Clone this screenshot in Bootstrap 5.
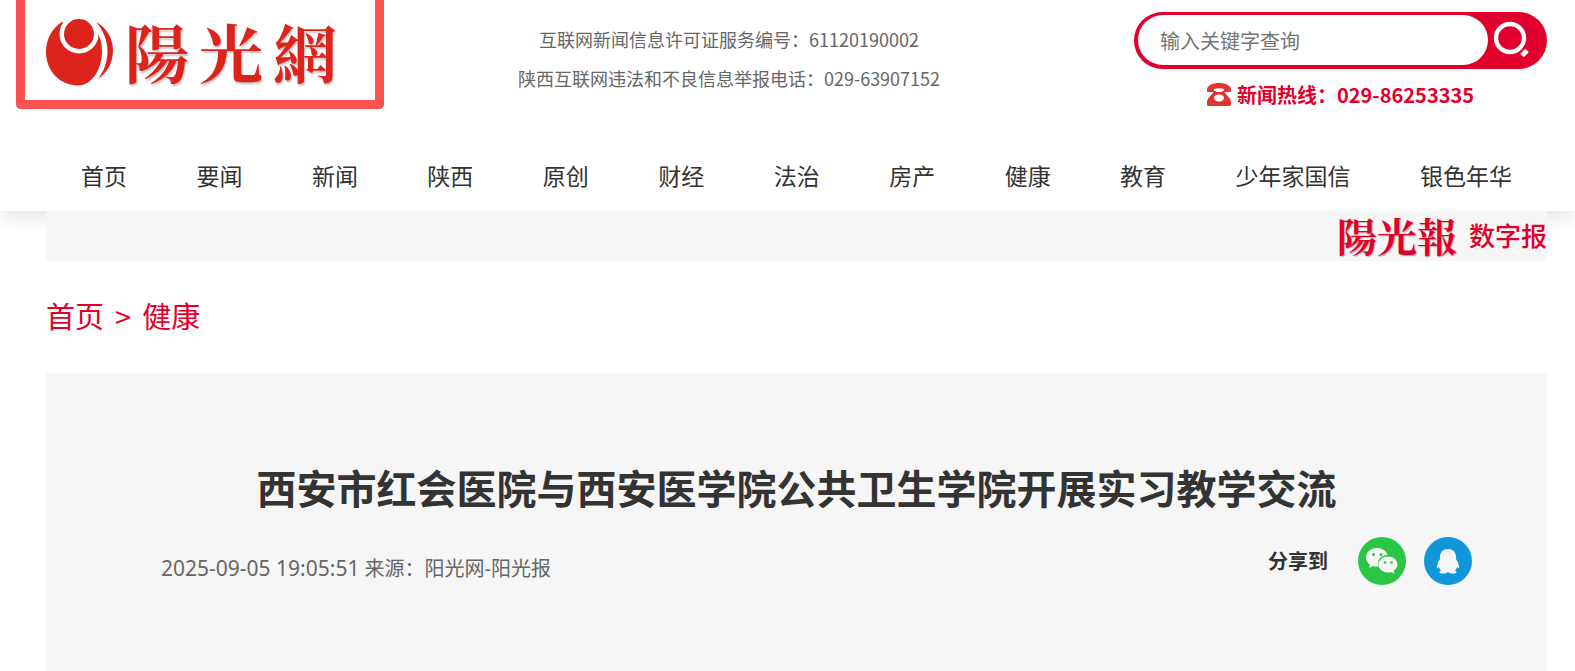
<!DOCTYPE html>
<html lang="zh-CN">
<head>
<meta charset="utf-8">
<meta name="viewport" content="width=device-width, initial-scale=1">
<title>西安市红会医院与西安医学院公共卫生学院开展实习教学交流</title>
<link rel="stylesheet" href="https://cdn.jsdelivr.net/npm/bootstrap@5.3.0/dist/css/bootstrap.min.css">
<style>
  :root { --brand: #e1002c; --panel: #f6f6f6; }
  body { font-family: "Noto Sans CJK SC", sans-serif; color: #333; background: #fff; }
  a { text-decoration: none; }
  .site-header { box-shadow: 0 4px 20px rgba(0, 0, 0, .12); }
  .masthead { padding: 0 28px 0 16px; }
  .brand-frame { width: 368px; height: 109px; padding: 0 0 0 20px; border: 9px solid #fc5250; border-top: 0; border-radius: 0 0 5px 5px; color: #dc241c; }
  .brand-name { font: 700 64px/84px "Noto Serif CJK TC", "Noto Sans CJK TC", serif; gap: 10px; margin-left: 10px; text-shadow: 1px 2px 2px rgba(0, 0, 0, .25); }
  .licence { font-size: 18px; line-height: 39px; color: #666; padding: 20px 60px 0 0; }
  .search-side { width: 413px; padding-top: 12px; }
  .search-pill { height: 57px; background: var(--brand); border-radius: 29px; padding: 3px 14px 4px 4px; }
  .search-pill .form-control { font-size: 20px; height: 50px; border: 0; border-radius: 25px; padding: 0 22px; box-shadow: none; }
  .search-pill .form-control::placeholder { color: #757575; }
  .search-pill button { width: 45px; }
  .hotline { font-size: 20px; line-height: 30px; color: var(--brand); margin-top: 11px; gap: 6px; }
  .main-nav { padding: 15px 63px 18px 81px; margin-top: 32px; }
  .main-nav a { font-size: 23px; line-height: 36px; color: #333; }
  .content { padding: 0 28px 0 46px; }
  .paper-bar { background: var(--panel); height: 50px; }
  .paper-bar a { color: var(--brand); gap: 12px; }
  .paper-name { font: 700 40px/48px "Noto Serif CJK TC", "Noto Sans CJK TC", serif; text-shadow: 1px 1px 1px rgba(0, 0, 0, .25); }
  .paper-label { font-size: 26px; font-weight: 500; line-height: 48px; }
  .crumbs { font-size: 29px; line-height: 40px; padding: 34px 0 38px; gap: 11px; color: var(--brand); }
  .crumbs a { color: var(--brand); }
  .article { background: var(--panel); padding: 84px 75px 84px 115px; min-height: 299px; }
  .article h1 { font-size: 40px; line-height: 60px; margin: 0 0 4px -40px; }
  .meta { font-family: "Noto Sans", "Noto Sans CJK SC", sans-serif; font-size: 20px; line-height: 30px; color: #666; padding-top: 16px; }
  .meta time { font-size: 21px; }
  .share { gap: 18px; }
  .share span { font-size: 20px; margin-right: 12px; }
</style>
</head>
<body>
<header class="site-header">
  <div class="masthead d-flex align-items-start">
    <a href="#" class="brand-frame d-flex align-items-center flex-shrink-0" aria-label="陽光網">
      <svg width="70" height="72" viewBox="0 -3 70 72" fill="#dc241c" aria-hidden="true">
        <path d="M17 5C7 11 1 22 1 35c0 19 14 33.500 32 33.500C47 68.500 57 52 57 34c0-8-2-15-6-21z"/>
        <circle cx="34" cy="17" r="19.500" fill="#fff"/>
        <circle cx="34" cy="17" r="15"/>
        <path d="M51 5c10 5 17 16 17 28 0 13-6 23-15 29 6-8 9.500-17 9.500-28C62.500 23 58 13 51 5z"/>
      </svg>
      <span class="brand-name d-flex"><span>陽</span><span>光</span><span>網</span></span>
    </a>
    <div class="licence flex-grow-1 text-center">
      <div>互联网新闻信息许可证服务编号：61120190002</div>
      <div>陕西互联网违法和不良信息举报电话：029-63907152</div>
    </div>
    <div class="search-side flex-shrink-0">
      <form class="search-pill d-flex">
        <input type="text" class="form-control" placeholder="输入关键字查询" aria-label="输入关键字查询">
        <button type="submit" class="btn p-0 border-0 flex-shrink-0" aria-label="查询">
          <svg width="38" height="38" viewBox="0 0 38 38" fill="none" stroke="#fff" aria-hidden="true">
            <circle cx="18" cy="17" r="14" stroke-width="4.4"/>
            <path d="M30 34.500l5-5" stroke-width="5"/>
          </svg>
        </button>
      </form>
      <div class="hotline d-flex justify-content-center align-items-center fw-bold">
        <svg width="24" height="24" viewBox="0 0 24 24" fill="#e3352f" aria-hidden="true">
          <path d="M0 9V6c1-4 6-6 12-6s11 2 12 6v3h-7V6c-3-1-7-1-10 0v3z"/>
          <path fill-rule="evenodd" d="M7 8h2v1h6V8h2c1 3 7 7 7 11v3q0 1-2 1H2q-2 0-2-1v-3C0 15 6 11 7 8zm5 3.500c-3 0-5 1.500-5 3.500s2 3.500 5 3.500 5-1.500 5-3.500-2-3.500-5-3.500z"/>
        </svg>
        <span>新闻热线：029-86253335</span>
      </div>
    </div>
  </div>
  <nav class="main-nav d-flex justify-content-between">
    <a href="#">首页</a><a href="#">要闻</a><a href="#">新闻</a><a href="#">陕西</a><a href="#">原创</a><a href="#">财经</a><a href="#">法治</a><a href="#">房产</a><a href="#">健康</a><a href="#">教育</a><a href="#">少年家国信</a><a href="#">银色年华</a>
  </nav>
</header>
<main class="content position-relative">
  <div class="paper-bar d-flex justify-content-end">
    <a href="#" class="d-flex"><span class="paper-name">陽光報</span><span class="paper-label">数字报</span></a>
  </div>
  <nav class="crumbs d-flex" aria-label="breadcrumb">
    <a href="#">首页</a><span>&gt;</span><a href="#">健康</a>
  </nav>
  <article class="article">
    <h1 class="text-center fw-bold">西安市红会医院与西安医学院公共卫生学院开展实习教学交流</h1>
    <div class="d-flex justify-content-between align-items-start pt-3">
      <div class="meta"><time>2025-09-05 19:05:51</time> 来源：阳光网-阳光报</div>
      <div class="share d-flex align-items-center">
        <span class="fw-bold">分享到</span>
        <a href="#" class="d-flex" aria-label="微信">
          <svg width="48" height="48" viewBox="0 0 48 48" aria-hidden="true">
            <circle cx="24" cy="24" r="24" fill="#2bc646"/>
            <path fill="#f6f6f6" d="M19 11c-6 0-11 4-11 9.500 0 3 1.500 5.500 4 7.200L11 31l4-2c2 .6 4 .8 6 .6C18 23 23 18 29.600 18 28.500 14 24 11 19 11z"/>
            <path fill="#f6f6f6" d="M30 19.500c-5 0-9.500 3.500-9.500 8s4.500 8 9.500 8c1.200 0 2.300-.2 3.500-.6L36.500 37l-.8-3.200c2.300-1.500 3.800-3.700 3.800-6.300 0-4.500-4.500-8-9.500-8z"/>
            <g fill="#2bc646"><circle cx="15.500" cy="17.500" r="1.500"/><circle cx="23" cy="17.500" r="1.500"/><circle cx="27" cy="25.500" r="1.300"/><circle cx="33.500" cy="25.500" r="1.300"/></g>
          </svg>
        </a>
        <a href="#" class="d-flex" aria-label="QQ">
          <svg width="48" height="48" viewBox="0 0 48 48" aria-hidden="true">
            <circle cx="24" cy="24" r="24" fill="#1296db"/>
            <path fill="#f6f6f6" d="M24 12c-5 0-8 3.500-8 8v2c-2 3-3 5.500-3 8 0 1.500.8 1.700 2 0 .4 1.500 1 2.500 2 3.500-3 1.500-1.500 3 2 3 2 0 4-.5 5-1.500 1 1 3 1.500 5 1.500 3.500 0 5-1.500 2-3 1-1 1.600-2 2-3.500 1.200 1.700 2 1.500 2 0 0-2.500-1-5-3-8v-2c0-4.500-3-8-8-8z"/>
          </svg>
        </a>
      </div>
    </div>
  </article>
</main>
<script src="https://cdn.jsdelivr.net/npm/bootstrap@5.3.0/dist/js/bootstrap.bundle.min.js"></script>
</body>
</html>
